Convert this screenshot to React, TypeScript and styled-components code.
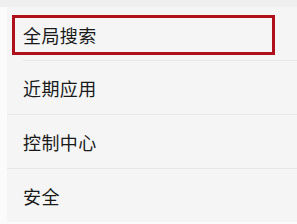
import React from 'react'
import styled, { createGlobalStyle } from 'styled-components'

const GlobalStyle = createGlobalStyle`
  html, body {
    margin: 0;
    padding: 0;
    background: #fbfbfb;
  }
  body {
    font-family: "Noto Sans CJK SC", "Noto Sans", sans-serif;
  }
`

const Page = styled.div`
  width: 297px;
  height: 224px;
  display: flex;
  flex-direction: column;
  overflow: hidden;
`

const TopStrip = styled.div`
  height: 7px;
  background: #efefef;
`

const Panel = styled.ul`
  margin: 0 0 0 7px;
  padding: 0;
  list-style: none;
  background: #f5f5f5;
  height: 215px;
`

const Row = styled.li<{ last?: boolean }>`
  height: 53px;
  display: flex;
  align-items: center;
  padding-left: 16px;
  border-bottom: ${props => (props.last ? 'none' : '1px solid #e7e7e7')};
  font-size: 18px;
  color: #1a1a1a;
  letter-spacing: 0.4px;
`

const HighlightRow = styled.li`
  height: 53px;
  position: relative;
  border-bottom: 1px solid #e7e7e7;
  margin-left: 16px;
`

const Highlight = styled.div`
  position: absolute;
  left: -11px;
  top: 8px;
  box-sizing: border-box;
  width: 263px;
  height: 40px;
  border: 3px solid #b0101b;
  display: flex;
  align-items: center;
  padding-left: 8px;
  font-size: 18px;
  color: #1a1a1a;
  letter-spacing: 0.4px;
`

const items = ['近期应用', '控制中心', '安全']

const App = () => {
  return (
    <Page>
      <GlobalStyle />
      <TopStrip />
      <Panel>
        <HighlightRow>
          <Highlight>全局搜索</Highlight>
        </HighlightRow>
        {items.map((label, i) => (
          <Row key={label} last={i === items.length - 1}>
            {label}
          </Row>
        ))}
      </Panel>
    </Page>
  )
}

export default App
